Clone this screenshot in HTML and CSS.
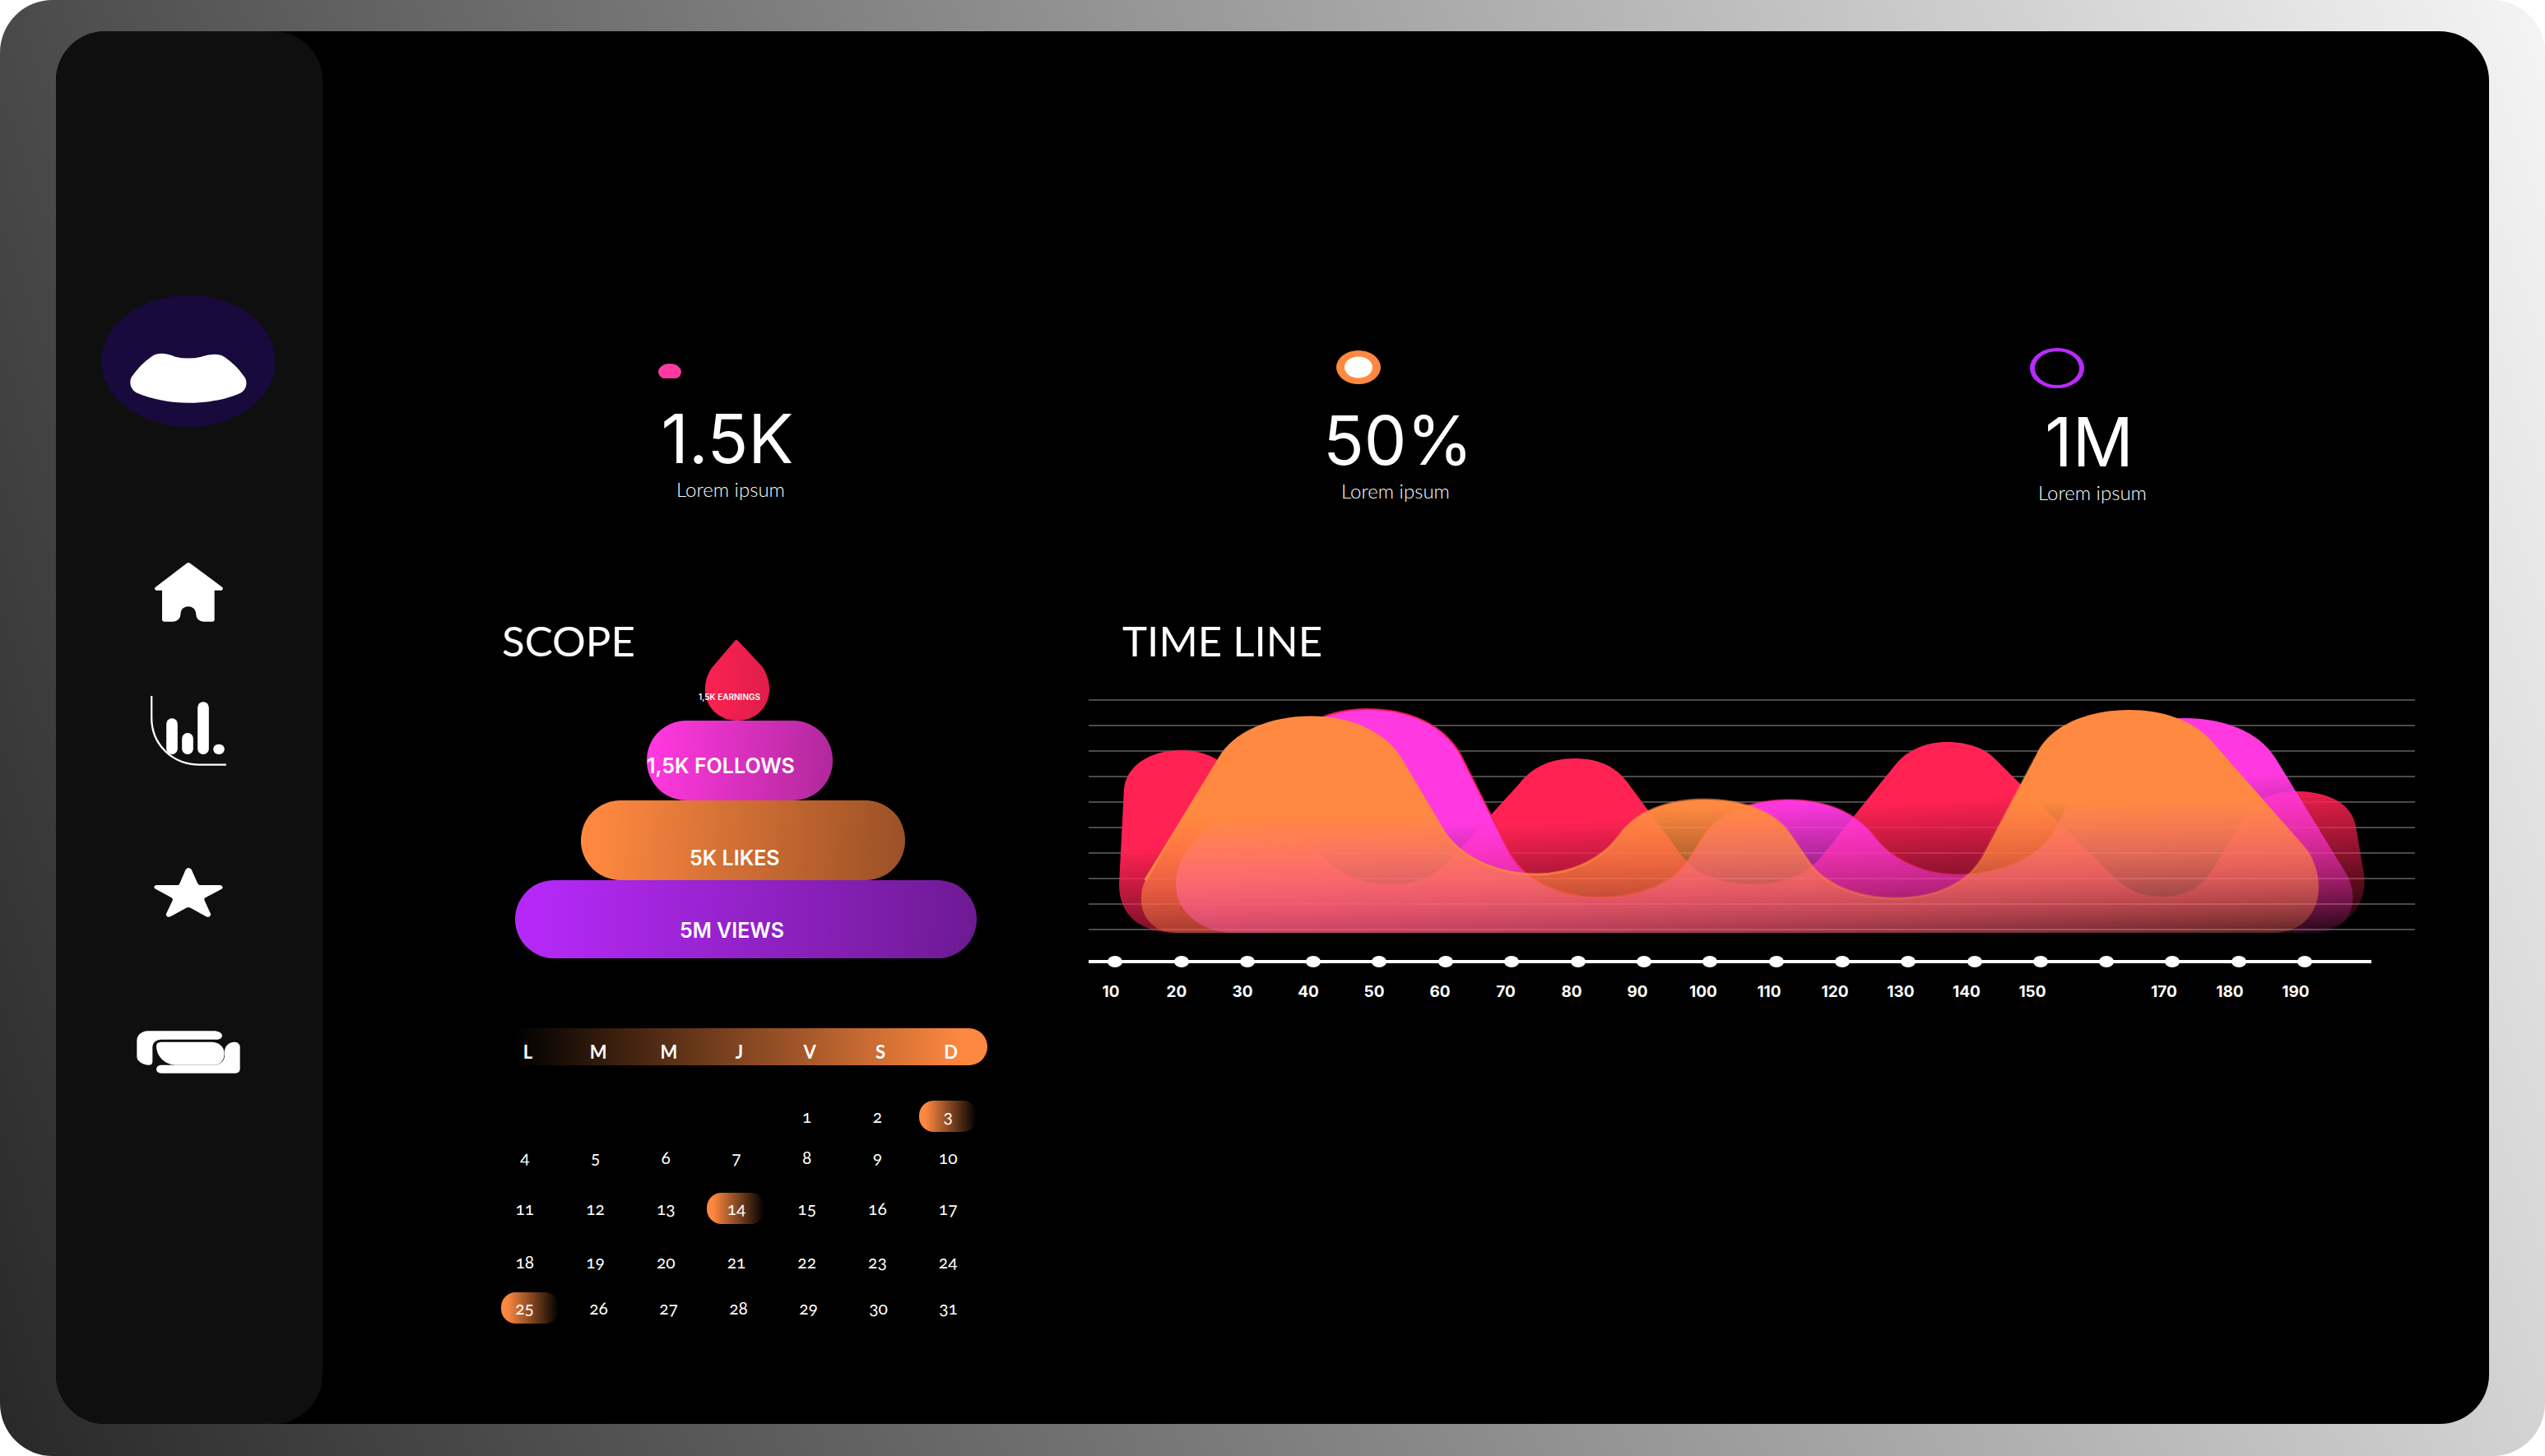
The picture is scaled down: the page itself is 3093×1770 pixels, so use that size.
FILE: index.html
```html
<!DOCTYPE html>
<html lang="en">
<head>
  <meta charset="utf-8">
  <meta name="viewport" content="width=device-width, initial-scale=1">
  <title>Dashboard</title>
  <link rel="stylesheet" href="styles.css">
</head>
<body>
  <div class="frame">
    <div class="panel">
      <aside class="sidebar">
        <svg class="logo" viewBox="369 1006 638 448" width="212" height="160" preserveAspectRatio="none" role="img" aria-label="Logo">
          <ellipse cx="688" cy="1230" rx="319" ry="224" fill="#180a3c"/>
          <path fill="#fff" d="M480 1284C500 1256 525 1233 555 1213C580 1199 608 1204 640 1215Q688 1226 735 1215C775 1204 800 1204 820 1216C850 1236 876 1259 895 1287C906 1306 898 1328 880 1338C825 1362 755 1372 690 1372C620 1372 555 1360 497 1337C476 1324 470 1304 480 1284Z"/>
        </svg>
        <nav aria-label="Main">
          <ul class="nav">
            <li class="nav-home"><a href="#home" aria-label="Home">
              <svg viewBox="264 136 249 216" width="83" height="72" fill="#fff"><path d="M380 139Q387 133 394 139L510 225Q516 231 508 237H482V343Q482 351 474 351H442Q415 349 414 320C412 288 361 288 359 320Q358 349 331 351H300Q291 351 291 343V237H269Q260 231 267 225Z"/></svg>
            </a></li>
            <li class="nav-stats"><a href="#stats" aria-label="Statistics">
              <svg viewBox="250 621 275 255" width="92" height="85" fill="#fff"><rect x="307" y="703" width="41" height="131" rx="20"/><rect x="364" y="756" width="41" height="78" rx="20"/><rect x="421" y="643" width="41" height="191" rx="20"/><rect x="478" y="797" width="41" height="37" rx="19"/><path d="M253 621V700C253 800 330 872 430 872H525" fill="none" stroke="#fff" stroke-width="7"/></svg>
            </a></li>
            <li class="nav-star"><a href="#favourites" aria-label="Favourites">
              <svg viewBox="261 108 252 181" width="84" height="60" fill="#fff"><path d="M377 114Q387 102 398 114L421 165Q424 171 430 171H505Q517 177 510 185L448 218Q444 221 446 227L469 278Q469 290 455 288L395 255Q387 251 379 255L321 287Q306 292 305 278L329 227Q330 220 325 217L264 184Q257 175 268 171H347Q353 171 355 165Z"/></svg>
            </a></li>
            <li class="nav-video"><a href="#videos" aria-label="Videos">
              <svg viewBox="195 702 378 156" width="126" height="52" fill="#fff"><path d="M235 703H475C495 703 506 711 507 719C507 728 498 734 486 734H285C265 735 254 745 253 762V815Q252 827 240 827C215 826 197 812 196 797V737C197 716 215 704 235 703Z"/><path d="M284 743H470C497 744 515 762 515 785C515 810 498 827 478 827H335C297 825 267 795 267 757Q268 744 284 743Z"/><path d="M284 827H478C500 827 515 812 516 795V775C518 757 532 743 550 743Q569 743 572 759V842Q571 856 555 857H284Q268 856 267 842Q268 828 284 827Z"/><path d="M320 827H478Q506 825 515 800" fill="none" stroke="#ccc" stroke-width="1"/></svg>
            </a></li>
          </ul>
        </nav>
      </aside>

      <main class="main">
        <section class="stats" aria-label="Key figures">
          <div class="stat">
            <svg class="icon-dome" viewBox="0 0 28 18" width="28" height="18"><path fill="#fc3aa2" d="M14 0C22 0 28 5 28 10Q27 17 21 18H6Q1 16 0 10C0 5 6 0 14 0Z"/></svg>
            <strong class="stat-value">1.5K</strong>
            <span class="stat-label">Lorem ipsum</span>
          </div>
          <div class="stat">
            <svg class="icon-disc" viewBox="0 0 54 41" width="54" height="41"><ellipse cx="27" cy="20.500" rx="27" ry="20.500" fill="#ff8840"/><ellipse cx="27" cy="20.500" rx="17" ry="13" fill="#fff"/></svg>
            <strong class="stat-value">50%</strong>
            <span class="stat-label">Lorem ipsum</span>
          </div>
          <div class="stat">
            <svg class="icon-ring" viewBox="0 0 66 49" width="66" height="49"><path fill="#b92bff" fill-rule="evenodd" d="M33 0A33 24.500 0 1 1 33 49A33 24.500 0 1 1 33 0ZM33 4A27 20.500 0 1 0 33 45A27 20.500 0 1 0 33 4Z"/></svg>
            <strong class="stat-value">1M</strong>
            <span class="stat-label">Lorem ipsum</span>
          </div>
        </section>

        <div class="columns">
          <div class="left">
            <section class="scope">
              <div class="scope-head">
                <h2>SCOPE</h2>
                <div class="drop">
                  <svg viewBox="0 0 78 99" width="78" height="99">
                    <defs><linearGradient id="drop" x1="0" x2="1"><stop offset="0" stop-color="#fb2250"/><stop offset="1" stop-color="#e01d49"/></linearGradient></defs>
                    <path fill="url(#drop)" d="M36 2Q38 0 40 2L70 34C76 44 78 52 78 61C78 83 61 99 39 99C17 99 0 83 0 61C0 52 2 44 8 35Z"/>
                  </svg>
                  <span>1,5K EARNINGS</span>
                </div>
              </div>
              <div class="tier tier-follows">1,5K FOLLOWS</div>
              <div class="tier tier-likes">5K LIKES</div>
              <div class="tier tier-views">5M VIEWS</div>
            </section>

            <table class="calendar">
              <thead>
                <tr><th scope="col">L</th><th scope="col">M</th><th scope="col">M</th><th scope="col">J</th><th scope="col">V</th><th scope="col">S</th><th scope="col">D</th></tr>
              </thead>
              <tbody>
                <tr><td></td><td></td><td></td><td></td><td>1</td><td>2</td><td><span class="marked">3</span></td></tr>
                <tr><td>4</td><td>5</td><td>6</td><td>7</td><td>8</td><td>9</td><td>10</td></tr>
                <tr class="tall"><td>11</td><td>12</td><td>13</td><td><span class="marked">14</span></td><td>15</td><td>16</td><td>17</td></tr>
                <tr class="mid"><td>18</td><td>19</td><td>20</td><td>21</td><td>22</td><td>23</td><td>24</td></tr>
                <tr class="mid"><td><span class="marked">25</span></td><td>26</td><td>27</td><td>28</td><td>29</td><td>30</td><td>31</td></tr>
              </tbody>
            </table>
          </div>

          <section class="timeline">
            <h2>TIME LINE</h2>
            <svg class="chart" viewBox="1310 840 1625 350" role="img" aria-label="Time line chart">
              <defs>
                <linearGradient id="red" gradientUnits="userSpaceOnUse" x1="1400" y1="1033" x2="1412" y2="1235"><stop offset="0" stop-color="#ff2252"/><stop offset="1" stop-color="#ff2252" stop-opacity="0"/></linearGradient>
                <linearGradient id="magenta" gradientUnits="userSpaceOnUse" x1="1400" y1="1027" x2="1413" y2="1240"><stop offset="0" stop-color="#ff38df"/><stop offset="1" stop-color="#ff38df" stop-opacity="0"/></linearGradient>
                <linearGradient id="orange" gradientUnits="userSpaceOnUse" x1="1400" y1="996" x2="1404" y2="1212"><stop offset="0" stop-color="#ff8940"/><stop offset="1" stop-color="#ff8940" stop-opacity="0"/></linearGradient>
                <linearGradient id="redline" gradientUnits="userSpaceOnUse" x1="1600" y1="0" x2="2500" y2="0"><stop offset="0" stop-color="#ee1a48"/><stop offset="1" stop-color="#ee1a48" stop-opacity="0.200"/></linearGradient>
                <linearGradient id="orangeline" gradientUnits="userSpaceOnUse" x1="1600" y1="0" x2="2500" y2="0"><stop offset="0" stop-color="#ff8940"/><stop offset="1" stop-color="#ff8940" stop-opacity="0.200"/></linearGradient>
              </defs>
              <path stroke="#4a4a4a" stroke-width="2" d="M1323 854H2935M1323 885H2935M1323 916H2935M1323 947H2935M1323 978H2935M1323 1009H2935M1323 1040H2935M1323 1071H2935M1323 1102H2935M1323 1133H2935"/>
              <path fill="url(#red)" d="M1360 1078L1366 963C1368 935 1396 915 1436 915C1470 915 1490 932 1505 948L1618 1054C1638 1070 1662 1078 1693 1078C1725 1078 1748 1066 1768 1042L1847 955C1862 936 1884 925 1913 925C1940 925 1962 933 1977 953L2046 1046C2062 1066 2092 1078 2131 1078C2163 1078 2193 1068 2213 1045L2304 932C2318 915 2340 905 2366 905C2390 905 2412 912 2424 925L2572 1072C2585 1084 2604 1093 2627 1093C2652 1093 2673 1084 2685 1066L2732 990C2744 974 2765 965 2791 965C2830 965 2858 980 2863 1007L2873 1066C2878 1105 2850 1137 2800 1137L1430 1137C1385 1137 1360 1115 1360 1078Z"/>
              <path fill="url(#magenta)" d="M1429 1078C1429 1060 1436 1045 1446 1032L1547 920C1575 884 1615 865 1661 865C1715 865 1755 885 1775 920L1832 1034C1850 1072 1893 1094 1943 1094C1992 1094 2032 1078 2052 1048L2072 1017C2092 989 2130 975 2174 975C2222 975 2260 993 2280 1022C2300 1048 2338 1066 2379 1066C2432 1066 2476 1045 2495 1016L2535 935C2550 900 2595 876 2655 876C2702 876 2745 892 2765 924L2852 1066C2870 1100 2855 1137 2812 1137L1500 1137C1458 1137 1429 1110 1429 1078Z"/>
              <path fill="none" stroke="url(#redline)" stroke-width="2" d="M1547 920C1575 884 1615 865 1661 865C1715 865 1755 885 1775 920L1832 1034C1850 1072 1893 1094 1943 1094C1992 1094 2032 1078 2052 1048L2072 1017C2092 989 2130 975 2174 975C2222 975 2260 993 2280 1022C2300 1048 2338 1066 2379 1066C2432 1066 2476 1045 2495 1016"/>
              <path fill="url(#orange)" d="M1392 1073L1482 925C1500 894 1543 875 1593 875C1645 875 1687 896 1705 930L1750 1006C1768 1042 1815 1066 1867 1066C1910 1066 1948 1047 1968 1019C1988 990 2026 975 2072 975C2118 975 2158 990 2176 1018L2200 1053C2218 1078 2256 1095 2302 1095C2352 1095 2392 1078 2411 1042L2474 922C2488 888 2532 866 2587 866C2628 866 2664 878 2687 903L2804 1036C2830 1075 2822 1137 2760 1137L1430 1137C1400 1137 1386 1115 1387 1095Q1387 1083 1392 1073Z"/>
              <path fill="none" stroke="url(#orangeline)" stroke-width="3" d="M1392 1073L1482 925C1500 894 1543 875 1593 875C1645 875 1687 896 1705 930L1750 1006C1768 1042 1815 1066 1867 1066C1910 1066 1948 1047 1968 1019C1988 990 2026 975 2072 975C2118 975 2158 990 2176 1018L2200 1053C2218 1078 2256 1095 2302 1095C2352 1095 2392 1078 2411 1042L2474 922"/>
              <path stroke="#fff" stroke-width="4" d="M1323 1172H2882"/>
              <g fill="#fff">
                <ellipse cx="1355" cy="1172" rx="9" ry="7"/><ellipse cx="1436" cy="1172" rx="9" ry="7"/><ellipse cx="1516" cy="1172" rx="9" ry="7"/><ellipse cx="1596" cy="1172" rx="9" ry="7"/><ellipse cx="1676" cy="1172" rx="9" ry="7"/><ellipse cx="1757" cy="1172" rx="9" ry="7"/><ellipse cx="1837" cy="1172" rx="9" ry="7"/><ellipse cx="1918" cy="1172" rx="9" ry="7"/><ellipse cx="1998" cy="1172" rx="9" ry="7"/><ellipse cx="2078" cy="1172" rx="9" ry="7"/><ellipse cx="2159" cy="1172" rx="9" ry="7"/><ellipse cx="2239" cy="1172" rx="9" ry="7"/><ellipse cx="2319" cy="1172" rx="9" ry="7"/><ellipse cx="2400" cy="1172" rx="9" ry="7"/><ellipse cx="2480" cy="1172" rx="9" ry="7"/><ellipse cx="2560" cy="1172" rx="9" ry="7"/><ellipse cx="2640" cy="1172" rx="9" ry="7"/><ellipse cx="2721" cy="1172" rx="9" ry="7"/><ellipse cx="2801" cy="1172" rx="9" ry="7"/>
              </g>
            </svg>
            <ol class="axis">
              <li>10</li><li>20</li><li>30</li><li>40</li><li>50</li><li>60</li><li>70</li><li>80</li><li>90</li><li>100</li><li>110</li><li>120</li><li>130</li><li>140</li><li>150</li><li></li><li>170</li><li>180</li><li>190</li>
            </ol>
          </section>
        </div>
      </main>
    </div>
  </div>
</body>
</html>
```
FILE: styles.css
```css
* {
  box-sizing: border-box;
}

body {
  margin: 0;
  background: #fff;
  color: #fff;
  font-family: Lato, "Open Sans", sans-serif;
}

svg {
  display: block;
}

h2 {
  margin: 0;
  font-size: 51px;
  line-height: 60px;
  font-weight: 400;
}

.frame {
  display: flex;
  min-height: 100vh;
  padding: 38px 68px 39px;
  border-radius: 64px;
  background: linear-gradient(71deg, #282828, #f5f5f5);
}

.panel {
  display: flex;
  flex: 1;
  border-radius: 60px;
  background: #000;
}

/* Sidebar */
.sidebar {
  display: flex;
  flex: 0 0 324px;
  flex-direction: column;
  align-items: center;
  padding: 321px 2px 0 0;
  border-radius: 60px;
  background: #0f0f0f;
}

.nav {
  display: flex;
  flex-direction: column;
  align-items: center;
  margin: 0;
  padding: 0;
  list-style: none;
}

.nav a {
  display: block;
}

.nav-home {
  margin-top: 165px;
}

.nav-stats {
  margin-top: 90px;
}

.nav-star {
  margin-top: 124px;
}

.nav-video {
  margin-top: 138px;
}

/* Main area */
.main {
  flex: 1;
  min-width: 0;
  padding-top: 378px;
}

.stats {
  display: grid;
  grid-template-columns: 808fr 847fr 570fr;
  padding-left: 408px;
}

.stat {
  display: flex;
  flex-direction: column;
  width: 168px;
}

.icon-dome {
  margin: 26px 0 28px;
}

.icon-disc {
  margin: 10px 16px 23px;
}

.icon-ring {
  margin: 7px 12px 20px;
}

.stat-value {
  font-family: Inter, sans-serif;
  font-size: 82px;
  font-weight: 400;
  line-height: 92px;
  text-align: center;
}

.stat-label {
  padding-left: 8px;
  font-size: 24px;
  font-weight: 300;
  line-height: 30px;
  text-align: center;
}

.columns {
  display: flex;
  gap: 110px;
  margin-top: 135px;
  padding: 0 90px 0 208px;
}

.left {
  flex: 0 0 600px;
}

/* Pyramid */
.scope {
  padding-left: 10px;
}

.scope-head {
  display: flex;
  align-items: flex-start;
}

.scope-head h2 {
  width: 247px;
}

.drop {
  position: relative;
  padding-top: 28px;
}

.drop span {
  position: absolute;
  top: 92px;
  left: -8px;
  font-family: Inter, sans-serif;
  font-size: 10px;
  font-weight: 600;
  line-height: 12px;
  white-space: nowrap;
}

.tier {
  display: flex;
  align-items: flex-end;
  height: 97px;
  border-radius: 48px;
  font-family: Inter, sans-serif;
  font-size: 25px;
  font-weight: 600;
  line-height: 28px;
  white-space: nowrap;
}

.tier-follows {
  width: 226px;
  margin-left: 176px;
  padding-bottom: 28px;
  background: linear-gradient(95deg, #ff38df 5%, #b0289a);
}

.tier-likes {
  width: 394px;
  margin-left: 96px;
  padding: 0 0 13px 132px;
  background: linear-gradient(95deg, #ff8840 5%, #995026);
}

.tier-views {
  width: 561px;
  height: 95px;
  margin-left: 16px;
  padding: 0 0 20px 200px;
  background: linear-gradient(95deg, #b529f8 5%, #6d1a92);
}

/* Calendar */
.calendar,
.calendar thead,
.calendar tbody {
  display: block;
}

.calendar {
  margin-top: 85px;
}

.calendar tr {
  display: grid;
  grid-template-columns: repeat(7, 1fr);
  height: 50px;
  align-items: center;
  text-align: center;
}

.calendar th,
.calendar td {
  padding: 0;
}

.calendar thead {
  border-radius: 24px;
  background: linear-gradient(90deg, #000 4%, #ff8840 95%);
}

.calendar thead tr {
  height: 45px;
  padding-top: 12px;
}

.calendar th {
  padding-right: 3px;
  font-size: 22px;
  font-weight: 700;
  line-height: 28px;
}

.calendar tbody {
  padding-top: 37px;
}

.calendar td {
  padding-right: 10px;
  font-size: 21px;
  font-weight: 400;
  line-height: 38px;
  font-variant-numeric: oldstyle-nums;
}

.calendar .tall {
  height: 74px;
}

.calendar .mid {
  height: 56px;
}

.marked {
  display: block;
  width: 71px;
  height: 38px;
  margin: 0 auto;
  border-radius: 18px;
  background: linear-gradient(90deg, #ff8840 10%, #000 98%);
}

.calendar td:first-child .marked {
  margin-left: 9px;
  padding-right: 14px;
}

/* Time line */
.timeline {
  flex: 1;
  min-width: 0;
}

.timeline h2 {
  padding-left: 54px;
}

.chart {
  width: 100%;
  margin-top: 28px;
}

.axis {
  display: grid;
  grid-template-columns: repeat(19, 1fr);
  width: 1520px;
  max-width: 100%;
  margin: 7px 0 0;
  padding: 0;
  list-style: none;
  font-family: Inter, sans-serif;
  font-size: 19px;
  font-weight: 700;
  line-height: 24px;
  text-align: center;
}
```
